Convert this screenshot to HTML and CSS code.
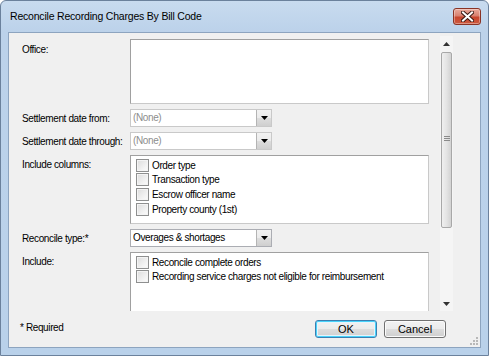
FILE: index.html
```html
<!DOCTYPE html>
<html>
<head>
<meta charset="utf-8">
<link rel="stylesheet" href="styles.css">
</head>
<body>
<div class="window">
  <div class="titlebar">
    <span class="title">Reconcile Recording Charges By Bill Code</span>
    <span class="close">
      <svg width="13" height="11" viewBox="0 0 13 11"><path d="M2 1.5 L11 9.5 M11 1.5 L2 9.5" stroke="#3b1a14" stroke-width="4" stroke-linecap="square"/><path d="M2 1.5 L11 9.5 M11 1.5 L2 9.5" stroke="#fff" stroke-width="2" stroke-linecap="square"/></svg>
    </span>
  </div>
  <div class="client">
    <div class="scrollarea">
      <div class="form">
        <span class="lbl top">Office:</span>
        <div class="listbox office"></div>

        <span class="lbl">Settlement date from:</span>
        <div class="combo disabled"><span class="val">(None)</span><span class="drop"><svg width="7" height="4" viewBox="0 0 7 4"><path d="M0 0 H7 L3.5 4 Z" fill="#000"/></svg></span></div>

        <span class="lbl">Settlement date through:</span>
        <div class="combo disabled"><span class="val">(None)</span><span class="drop"><svg width="7" height="4" viewBox="0 0 7 4"><path d="M0 0 H7 L3.5 4 Z" fill="#000"/></svg></span></div>

        <span class="lbl top cl">Include columns:</span>
        <div class="listbox checks cols">
          <div class="item"><span class="cb"></span>Order type</div>
          <div class="item"><span class="cb"></span>Transaction type</div>
          <div class="item"><span class="cb"></span>Escrow officer name</div>
          <div class="item"><span class="cb"></span>Property county (1st)</div>
        </div>

        <span class="lbl">Reconcile type:*</span>
        <div class="combo"><span class="val">Overages &amp; shortages</span><span class="drop"><svg width="7" height="4" viewBox="0 0 7 4"><path d="M0 0 H7 L3.5 4 Z" fill="#000"/></svg></span></div>

        <span class="lbl top cl">Include:</span>
        <div class="listbox checks inc">
          <div class="item"><span class="cb"></span>Reconcile complete orders</div>
          <div class="item"><span class="cb"></span>Recording service charges not eligible for reimbursement</div>
        </div>
      </div>
      <div class="vscroll">
        <span class="arrow up"><svg width="7" height="4" viewBox="0 0 7 4"><path d="M0 4 H7 L3.5 0 Z" fill="#333"/></svg></span>
        <span class="thumb"><span class="grip-lines"></span></span>
        <span class="track"></span>
        <span class="arrow down"><svg width="7" height="4" viewBox="0 0 7 4"><path d="M0 0 H7 L3.5 4 Z" fill="#333"/></svg></span>
      </div>
    </div>
    <div class="footer">
      <span class="req">* Required</span>
      <span class="btn ok">OK</span>
      <span class="btn">Cancel</span>
    </div>
    <span class="sizegrip">
      <svg width="10" height="10" viewBox="0 0 10 10" fill="#b8b8b8"><rect x="7" y="1" width="2" height="2"/><rect x="4" y="4" width="2" height="2"/><rect x="7" y="4" width="2" height="2"/><rect x="1" y="7" width="2" height="2"/><rect x="4" y="7" width="2" height="2"/><rect x="7" y="7" width="2" height="2"/></svg>
    </span>
  </div>
</div>
</body>
</html>
```

FILE: styles.css
```css
* { box-sizing: border-box; }
html, body { margin: 0; padding: 0; }
body {
  width: 489px;
  height: 356px;
  overflow: hidden;
  background: #ffffff;
  font-family: "Liberation Sans", Arial, sans-serif;
  font-size: 10px;
  letter-spacing: -0.38px;
  color: #000;
}
.window {
  width: 489px;
  height: 356px;
  border: 1px solid #6b819c;
  border-radius: 6px 6px 0 0;
  background: linear-gradient(180deg, #c8dbef 0px, #bcd2ea 30px, #b9d1ea 100%);
  padding: 0 7px 7px 7px;
  display: flex;
  flex-direction: column;
}
.titlebar {
  height: 31px;
  display: flex;
  align-items: flex-start;
  justify-content: space-between;
  flex: none;
}
.title {
  font-size: 10.5px;
  letter-spacing: -0.2px;
  padding: 9px 0 0 2px;
  color: #000;
}
.close {
  margin-top: 7px;
  width: 28px;
  height: 17px;
  border: 1px solid #8a3325;
  border-radius: 3px;
  background: linear-gradient(180deg, #e9a99b 0%, #d98170 45%, #c8452d 55%, #cd5a40 100%);
  box-shadow: inset 0 0 0 1px rgba(255,255,255,0.35);
  display: flex;
  align-items: center;
  justify-content: center;
}
.client {
  position: relative;
  flex: 1;
  background: #f0f0f0;
  border: 1px solid #8da4bf;
  display: flex;
  flex-direction: column;
}
.scrollarea {
  margin-top: 3px;
  height: 275px;
  display: flex;
  overflow: hidden;
  flex: none;
}
.form {
  display: grid;
  grid-template-columns: 108px 299px;
  grid-template-rows: 65px 18px 18px 69px 18px 62px;
  row-gap: 5px;
  padding: 3px 0 0 13px;
  width: 426px;
}
.lbl {
  align-self: center;
  white-space: nowrap;
}
.lbl.top { align-self: start; padding-top: 5px; }
.lbl.cl { padding-top: 4px; }
.listbox {
  background: #fff;
  border: 1px solid #a0a0a0;
  border-color: #a0a0a0 #c9c9c9 #c9c9c9 #a0a0a0;
}
.listbox.inc { border-bottom: none; height: 64px; }
.checks { padding: 2px 0 0 5px; }
.item {
  height: 14.67px;
  display: flex;
  align-items: center;
  white-space: nowrap;
}
.cb {
  width: 13px;
  height: 13px;
  border: 1px solid #8e8f8f;
  background: linear-gradient(135deg, #dcdcdc 0%, #f4f4f4 70%, #fbfbfb 100%);
  box-shadow: inset 0 0 0 1px #f4f4f4;
  margin-right: 3px;
  flex: none;
}
.combo {
  width: 142px;
  height: 18px;
  display: flex;
  background: #fff;
  border: 1px solid #abadb3;
  align-items: stretch;
}
.combo.disabled { border-color: #c9c9c9; }
.combo .val {
  flex: 1;
  padding-left: 2px;
  line-height: 16px;
  white-space: nowrap;
}
.combo.disabled .val { color: #8d8d8d; }
.drop {
  width: 15px;
  flex: none;
  border-left: 1px solid #b4b4b4;
  background: linear-gradient(180deg, #f2f2f2 0%, #ebebeb 50%, #dddddd 51%, #cfcfcf 100%);
  display: flex;
  align-items: center;
  justify-content: center;
}
.vscroll {
  margin-left: 5px;
  width: 13px;
  display: flex;
  flex-direction: column;
  background: #f5f5f5;
}
.arrow {
  height: 15px;
  display: flex;
  align-items: center;
  justify-content: center;
  flex: none;
}
.thumb {
  margin: 1px 1px 0 1px;
  height: 176px;
  border: 1px solid #a8a8a8;
  border-radius: 2px;
  background: linear-gradient(90deg, #f0f0f0 0%, #e4e4e4 50%, #d3d3d3 100%);
  flex: none;
  display: flex;
  align-items: center;
  justify-content: center;
}
.grip-lines {
  width: 6px;
  height: 6px;
  background: repeating-linear-gradient(180deg, #8a8a8a 0 1px, transparent 1px 2px);
  margin-top: -2px;
}
.track { flex: 1; }
.footer {
  flex: 1;
  display: flex;
  align-items: flex-start;
  padding: 9px 34px 0 11px;
}
.req {
  flex: 1;
  line-height: 16px;
}
.btn {
  width: 62px;
  height: 18px;
  border: 1px solid #707070;
  border-radius: 3px;
  background: linear-gradient(180deg, #f2f2f2 0%, #ebebeb 50%, #dddddd 51%, #cfcfcf 100%);
  box-shadow: inset 0 0 0 1px #fbfbfb;
  display: flex;
  align-items: center;
  justify-content: center;
  margin-left: 7px;
  font-size: 11px;
  letter-spacing: 0;
}
.btn.ok {
  border-color: #3c7fb1;
  box-shadow: inset 0 0 0 1px #48d3fb, inset 0 0 0 2px #e5f4fc;
}
.sizegrip {
  position: absolute;
  right: 1px;
  bottom: 1px;
  width: 10px;
  height: 10px;
  display: flex;
}
```
